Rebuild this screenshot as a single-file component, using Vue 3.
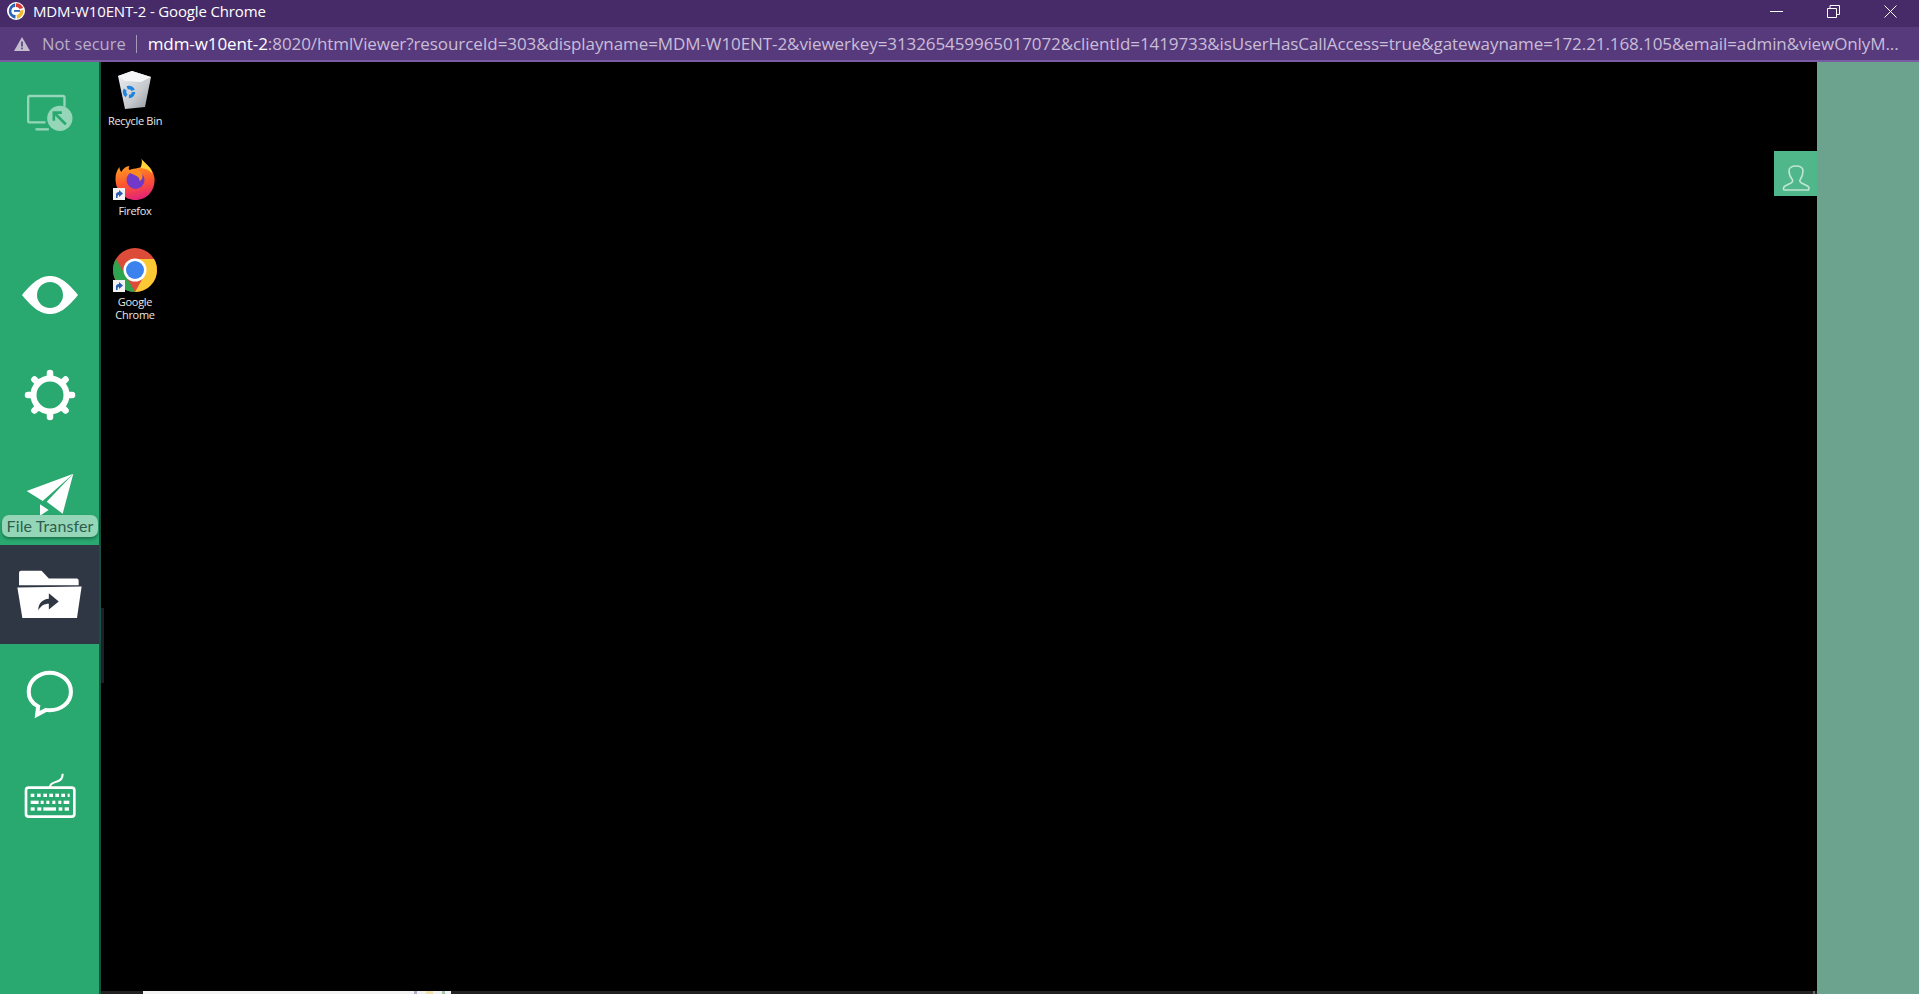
<script setup>
const urlHost = 'mdm-w10ent-2'
const urlRest = ':8020/htmlViewer?resourceId=303&displayname=MDM-W10ENT-2&viewerkey=313265459965017072&clientId=1419733&isUserHasCallAccess=true&gatewayname=172.21.168.105&email=admin&viewOnlyM...'

const keyRows = [
  { y: 672, keys: [[93, 11], [112, 11], [131, 11], [149, 11], [167, 11], [185, 11], [204, 6]] },
  { y: 693, keys: [[93, 24], [123, 9], [140, 9], [158, 9], [176, 9], [192, 17]] },
  { y: 713, keys: [[93, 12], [113, 12], [131, 38], [177, 11], [195, 13]] },
]
const gearTeeth = [0, 45, 90, 135, 180, 225, 270, 315]
</script>

<template>
  <div class="window">
    <header class="titlebar">
      <svg class="favicon" viewBox="0 0 18 18">
        <circle cx="9" cy="9" r="9" fill="#fff" />
        <path d="M9 1.2A7.8 7.8 0 0 1 16.2 6L12.6 7A4 4 0 0 0 9 5Z" fill="#d83a34" />
        <path d="M16.4 7.5A7.8 7.8 0 0 1 10 16.7L9.6 13A4 4 0 0 0 12.9 9Z" fill="#f2b632" />
        <path d="M8.2 1.3A7.8 7.8 0 0 0 8.4 16.7L8.6 13A4 4 0 0 1 8.2 5Z" fill="#2a62b8" />
        <rect x="7" y="8" width="6" height="1.8" fill="#2a62b8" />
      </svg>
      <span class="title-text">MDM-W10ENT-2 - Google Chrome</span>
      <div class="controls">
        <svg width="13" height="13" viewBox="0 0 13 13"><path d="M0 6.5H13" stroke="#fff" fill="none" /></svg>
        <svg width="13" height="13" viewBox="0 0 13 13"><path d="M.5 3.5h9v9h-9zM3 3.5V.5h9.500v9H9.500" stroke="#fff" fill="none" /></svg>
        <svg width="13" height="13" viewBox="0 0 13 13"><path d="M.5.5l12 12M12.500.5l-12 12" stroke="#fff" fill="none" /></svg>
      </div>
    </header>

    <div class="addressbar">
      <svg class="warn" width="16" height="14" viewBox="0 0 16 14">
        <path d="M8 0l8 14H0z" fill="#c4bccf" />
        <path d="M7.200 4.500h1.600v5H7.200zM7.200 10.500h1.600v1.700H7.200z" fill="#573a7c" />
      </svg>
      <span class="not-secure">Not secure</span>
      <span class="sep"></span>
      <span class="url"><span class="host">{{ urlHost }}</span>{{ urlRest }}</span>
    </div>

    <main class="content">
      <nav class="sidebar">
        <div class="nav-item first">
          <svg width="60" height="60" viewBox="58.500 66 180 180">
            <path d="M135 187H88a5 5 0 0 1-5-5V113a5 5 0 0 1 5-5H187a5 5 0 0 1 5 5V140" fill="none" stroke="#95d6b8" stroke-width="7" />
            <path d="M105 208h40" stroke="#95d6b8" stroke-width="7" fill="none" />
            <circle cx="178" cy="175" r="38" fill="#95d6b8" />
            <path d="M196 193L165 162M160 182V158h24" stroke="#29a86f" stroke-width="8" fill="none" />
          </svg>
        </div>

        <div class="nav-item">
          <svg width="60" height="44" viewBox="0 0 60 44">
            <path d="M2 22C14 7 22 3 30 3s16 4 28 19C46 37 38 41 30 41S14 37 2 22z" fill="#fff" />
            <circle cx="30" cy="22" r="13" fill="#29a86f" />
          </svg>
        </div>

        <div class="nav-item">
          <svg width="56" height="56" viewBox="0 0 56 56">
            <circle cx="28" cy="28" r="16.500" fill="none" stroke="#fff" stroke-width="6" />
            <path
              v-for="a in gearTeeth"
              :key="a"
              d="M28 9V6"
              stroke="#fff"
              stroke-width="6.500"
              stroke-linecap="round"
              :transform="`rotate(${a} 28 28)`"
            />
          </svg>
        </div>

        <div class="nav-item">
          <svg class="plane" width="50" height="46" viewBox="78 434 144 138">
            <path d="M220 436L80 488l48 30z" fill="#fff" />
            <path d="M220 436L140 520l48 36z" fill="#fff" />
            <path d="M120 528l26 17-26 17z" fill="#fff" />
          </svg>
          <span class="tooltip">File Transfer</span>
        </div>

        <div class="nav-item active">
          <svg width="65" height="49" viewBox="52 2 196 148">
            <path d="M58 48V10a6 6 0 0 1 6-6h62l22 24h84a6 6 0 0 1 6 6v14z" fill="#fff" />
            <path d="M53 55l194-3-14 95H68z" fill="#fff" />
            <path d="M116 124c0-22 14-34 32-35V72l30 25-30 24v-17c-14 0-24 6-32 20z" fill="#2f3744" />
          </svg>
        </div>

        <div class="nav-item">
          <svg width="50" height="50" viewBox="75 303 148 148">
            <path d="M148 314c-31 0-62 22-62 56 0 21 13 36 28 44l-3 24 26-14c4 1 7 1 11 1 32 0 63-21 63-55s-31-56-63-56z" fill="none" stroke="#fff" stroke-width="12" />
          </svg>
        </div>

        <div class="nav-item">
          <svg class="keyboard" width="54" height="50" viewBox="70 606 162 146">
            <rect x="79" y="654" width="145" height="87" rx="8" fill="none" stroke="#fff" stroke-width="8" />
            <path d="M151 652c0-22 38-6 38-40" fill="none" stroke="#fff" stroke-width="6" />
            <g v-for="row in keyRows" :key="row.y">
              <rect v-for="k in row.keys" :key="k[0]" :x="k[0]" :y="row.y" :width="k[1]" height="10" fill="#fff" />
            </g>
          </svg>
        </div>
      </nav>

      <section class="desktop">
        <div class="shortcuts">
          <div class="shortcut bin">
            <svg width="36" height="40" viewBox="0 0 36 40">
              <defs>
                <linearGradient id="binFill" x1="0" x2="1" y1="0" y2="1">
                  <stop offset="0" stop-color="#eef0f2" />
                  <stop offset="0.6" stop-color="#c7cbcf" />
                  <stop offset="1" stop-color="#8f959a" />
                </linearGradient>
              </defs>
              <path d="M1 6L15 1 34 7 28 37 8 39z" fill="url(#binFill)" />
              <path d="M1 6L15 1 34 7 24 12 8 11z" fill="#f4f5f6" />
              <circle cx="12" cy="22" r="4.500" fill="none" stroke="#1f84e0" stroke-width="3.500" stroke-dasharray="7 2.400" />
            </svg>
            <span class="label">Recycle Bin</span>
          </div>

          <div class="shortcut fox">
            <div class="icon-wrap">
              <svg width="41" height="42" viewBox="0 0 40 42">
                <defs>
                  <linearGradient id="foxFill" x1="0.4" x2="0.6" y1="0" y2="1">
                    <stop offset="0" stop-color="#ffb21f" />
                    <stop offset="0.55" stop-color="#ff5a2c" />
                    <stop offset="1" stop-color="#e2207a" />
                  </linearGradient>
                </defs>
                <path d="M26 0c1 6 11 7 13 20C40 33 31 42 20 42S0 33 0 21c0-5 1-8 4-12 0 3 1 4 2 5 1-3 5-6 8-6-1 2-1 3 0 4 5-2 13-2 13-4 1-3 0-6-1-8z" fill="url(#foxFill)" />
                <path d="M26 1c3 4 10 8 11 15-3-4-7-6-12-6 1-3 2-6 1-9z" fill="#ffd43b" />
                <circle cx="20" cy="22" r="9" fill="#7139c9" />
                <path d="M11 14c5-4 12-3 15 1 2 3 1 7-2 8 1-5-7-7-13-9z" fill="#ff8a1f" />
              </svg>
              <svg class="link-badge" width="12" height="12" viewBox="0 0 12 12">
                <rect width="12" height="12" fill="#f2f2f2" />
                <path d="M3 10V6.500C3 5 4 4 6 4V2l4 3.500L6 9V7C5 7 4.500 7.500 4.500 10z" fill="#2a5db0" />
              </svg>
            </div>
            <span class="label">Firefox</span>
          </div>

          <div class="shortcut chrome">
            <div class="icon-wrap">
              <svg width="44" height="44" viewBox="0 0 44 44">
                <circle cx="22" cy="22" r="22" fill="#dd4b39" />
                <path d="M3 11L14 30 22 44A22 22 0 0 1 3 11z" fill="#2ea44f" />
                <path d="M22 11H41A22 22 0 0 1 22 44L31 28z" fill="#fcc934" />
                <circle cx="22" cy="22" r="11.500" fill="#fff" />
                <circle cx="22" cy="22" r="9" fill="#3b82ee" />
              </svg>
              <svg class="link-badge" width="12" height="12" viewBox="0 0 12 12">
                <rect width="12" height="12" fill="#f2f2f2" />
                <path d="M3 10V6.500C3 5 4 4 6 4V2l4 3.500L6 9V7C5 7 4.500 7.500 4.500 10z" fill="#2a5db0" />
              </svg>
            </div>
            <span class="label">Google<br />Chrome</span>
          </div>
        </div>

        <div class="taskbar">
          <div class="taskbar-thumb"></div>
          <div class="taskbar-end"></div>
        </div>
        <div class="grip"></div>
        <div class="user-tab">
          <svg width="28" height="28" viewBox="0 0 28 28">
            <path d="M7 6C7 2.500 10 1 14 1s7 1.500 7 5c0 4-1.500 7-3 9-.5 1 0 2 1.500 3l6 3c1.500 1 2 3 1 4H2c-1-1-.5-3 1-4l6-3c1.500-1 2-2 1.500-3C9 13 7 10 7 6z" fill="none" stroke="#bfe6d3" stroke-width="1.600" />
          </svg>
        </div>
      </section>

      <aside class="side-panel"></aside>
    </main>
  </div>
</template>

<style>
html, body {
  margin: 0;
  height: 100%;
  overflow: hidden;
  background: #000;
}
</style>

<style scoped>
.window {
  display: flex;
  flex-direction: column;
  height: 100vh;
  font-family: "Open Sans", "Noto Sans", sans-serif;
}
.titlebar {
  display: flex;
  align-items: center;
  height: 27px;
  padding: 0 22px 5px 7px;
  box-sizing: border-box;
  background: #462b68;
  color: #fff;
}
.favicon {
  width: 18px;
  height: 18px;
  margin-right: 8px;
}
.title-text {
  font-size: 15px;
  letter-spacing: -0.15px;
  white-space: nowrap;
}
.controls {
  display: flex;
  gap: 44px;
  margin-left: auto;
}
.addressbar {
  display: flex;
  align-items: center;
  height: 35px;
  padding-left: 14px;
  box-sizing: border-box;
  background: #573a7c;
  border-bottom: 2px solid #7a5ca3;
  white-space: nowrap;
  overflow: hidden;
  font-size: 17px;
  color: #c9bdd8;
}
.warn {
  margin-right: 12px;
}
.not-secure {
  color: #b9adc9;
  font-size: 16.500px;
}
.sep {
  width: 1px;
  height: 18px;
  margin: 0 11px 0 10px;
  background: #a699b8;
}
.url {
  letter-spacing: -0.085px;
}
.host {
  color: #fff;
}
.content {
  display: flex;
  flex: 1;
  min-height: 0;
}
.sidebar {
  width: 99px;
  flex: none;
  display: flex;
  flex-direction: column;
  background: #29a86f;
  border-right: 2px solid #1c4f3f;
}
.nav-item {
  position: relative;
  height: 100px;
  flex: none;
  display: flex;
  align-items: center;
  justify-content: center;
}
.nav-item.first {
  margin-bottom: 83px;
}
.nav-item.active {
  background: #2f3744;
  height: 99px;
}
.plane {
  margin-top: 2px;
}
.keyboard {
  margin-top: 4px;
}
.tooltip {
  position: absolute;
  left: 2px;
  top: 70px;
  width: 96px;
  height: 22px;
  line-height: 22px;
  text-align: center;
  border-radius: 7px;
  background: #95d6b8;
  box-shadow: 0 2px 3px rgba(0, 0, 0, 0.3);
  color: #2d5e4c;
  font-family: Lato, sans-serif;
  font-size: 16px;
  letter-spacing: 0.1px;
}
.desktop {
  position: relative;
  flex: 1;
  background: #000;
  display: flex;
  flex-direction: column;
  justify-content: space-between;
  overflow: hidden;
}
.shortcuts {
  display: flex;
  flex-direction: column;
  align-items: center;
  width: 68px;
  padding-top: 8px;
}
.shortcut {
  display: flex;
  flex-direction: column;
  align-items: center;
  width: 68px;
}
.shortcut.bin {
  height: 88px;
}
.shortcut.fox {
  height: 90px;
}
.icon-wrap {
  position: relative;
  display: flex;
}
.link-badge {
  position: absolute;
  left: 0;
  bottom: 0;
}
.fox .link-badge {
  left: -2px;
  bottom: 0;
}
.label {
  margin-top: 4px;
  color: #e8e8e8;
  font-size: 11px;
  line-height: 13px;
  text-align: center;
  letter-spacing: -0.3px;
}
.chrome .label {
  margin-top: 3px;
}
.taskbar {
  display: flex;
  justify-content: space-between;
  height: 3px;
  background: #222;
}
.taskbar-thumb {
  width: 308px;
  height: 3px;
  margin-left: 42px;
  background: linear-gradient(to right, #f2f2f2 88%, #b4acc4 88% 89%, #f2f2f2 89% 92%, #efe2aa 92% 94%, #f2f2f2 94% 97%, #a3c4ae 97% 98%, #f2f2f2 98%);
}
.taskbar-end {
  width: 2px;
  height: 3px;
  margin-right: 2px;
  background: #666;
}
.grip {
  position: absolute;
  left: 0;
  top: 546px;
  width: 3px;
  height: 75px;
  background: #1a2229;
}
.user-tab {
  position: absolute;
  top: 89px;
  right: 0;
  width: 43px;
  height: 45px;
  display: flex;
  align-items: center;
  justify-content: center;
  background: #50b78a;
}
.user-tab svg {
  margin-top: 10px;
}
.side-panel {
  width: 102px;
  flex: none;
  background: #6ba38f;
}
</style>
